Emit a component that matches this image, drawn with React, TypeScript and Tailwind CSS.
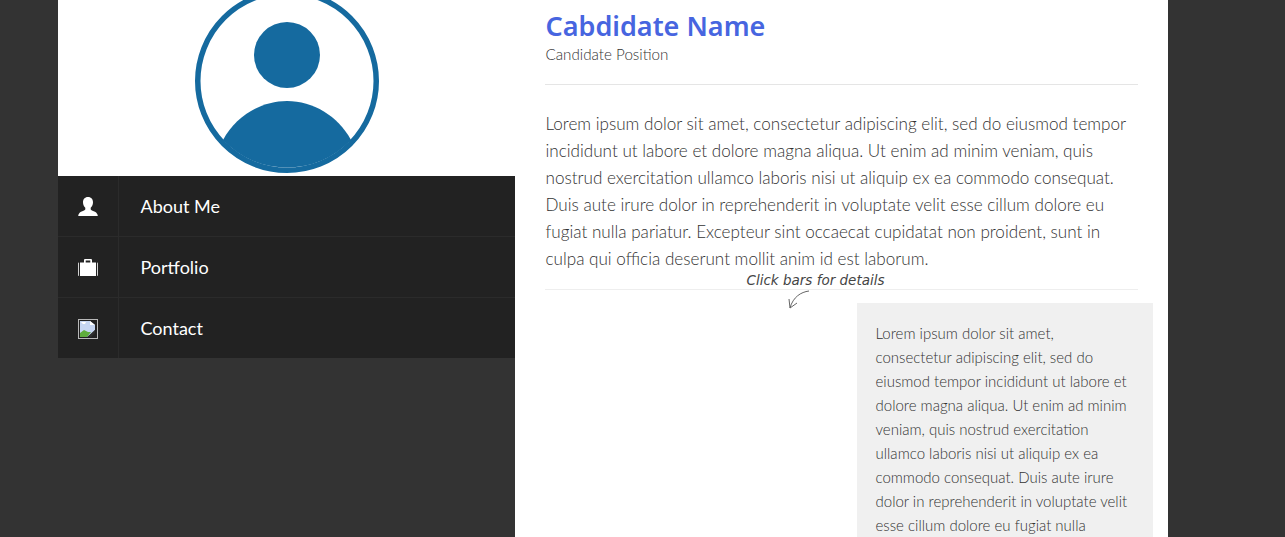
import React from "react";

const lines = [
  "Lorem ipsum dolor sit amet, consectetur adipiscing elit, sed do eiusmod tempor",
  "incididunt ut labore et dolore magna aliqua. Ut enim ad minim veniam, quis",
  "nostrud exercitation ullamco laboris nisi ut aliquip ex ea commodo consequat.",
  "Duis aute irure dolor in reprehenderit in voluptate velit esse cillum dolore eu",
  "fugiat nulla pariatur. Excepteur sint occaecat cupidatat non proident, sunt in",
  "culpa qui officia deserunt mollit anim id est laborum.",
];

const boxLines = [
  "Lorem ipsum dolor sit amet,",
  "consectetur adipiscing elit, sed do",
  "eiusmod tempor incididunt ut labore et",
  "dolore magna aliqua. Ut enim ad minim",
  "veniam, quis nostrud exercitation",
  "ullamco laboris nisi ut aliquip ex ea",
  "commodo consequat. Duis aute irure",
  "dolor in reprehenderit in voluptate velit",
  "esse cillum dolore eu fugiat nulla",
];

const UserIcon = () => (
  <svg width="20" height="20" viewBox="0 0 20 20" fill="#fff">
    <path d="M10 0c3.300 0 5 2.300 5 5.200 0 2.500-1 4.400-2.300 5.600v1.400c0 .9 1.300 1.300 3 2 1.800.7 3.300 1.600 4 3.800v1H0.300v-1c.7-2.200 2.200-3.100 4-3.800 1.700-.7 3-1.100 3-2v-1.400C6 9.600 5 7.700 5 5.200 5 2.300 6.700 0 10 0z" />
  </svg>
);

const CaseIcon = () => (
  <svg width="20" height="17" viewBox="0 0 20 17" fill="#fff">
    <path fillRule="evenodd" d="M6 3.500V1.200C6 .5 6.500 0 7.200 0h5.600c.7 0 1.200.5 1.200 1.200v2.300h4V17H2V3.500h4zm1.700-2v2h4.600v-2H7.700z" />
    <path d="M0 4.700c0-.7.300-1.200.8-1.200V17C.3 17 0 16.500 0 16zM20 4.700c0-.7-.3-1.200-.8-1.200V17c.5 0 .8-.5.8-1z" />
  </svg>
);

const BrokenImage = () => (
  <svg width="20" height="20" viewBox="0 0 20 20">
    <rect x="0.500" y="0.500" width="19" height="19" fill="#222222" stroke="#b8b8b8" />
    <path d="M2 2h10l5 4v5l-6 7H2z" fill="#c6d6f2" />
    <path d="M3 3h5l-1 2H5z" fill="#ffffff" />
    <path d="M2 14l4-3 4 2 3 0-4 5H2z" fill="#5fae3c" />
    <path d="M9 18l8-7v3l-4 4z" fill="#2e2e2e" />
    <path d="M12 2v4h5z" fill="#ffffff" />
  </svg>
);

const navItems = [
  { label: "About Me", icon: <UserIcon /> },
  { label: "Portfolio", icon: <CaseIcon /> },
  { label: "Contact", icon: <BrokenImage /> },
];

export default function App() {
  return (
    <div className="h-[537px] overflow-hidden bg-[#333333] font-['Lato',sans-serif]">
      <div className="mx-auto flex h-full w-[1110px] -translate-x-[30px]">
        <aside className="w-[457px]">
          <div className="flex h-[176px] justify-center overflow-hidden bg-white">
            <svg width="184" height="184" viewBox="0 0 184 184" className="-mt-[11px] ml-[1px] shrink-0">
              <circle cx="92" cy="92" r="89.250" fill="none" stroke="#156a9f" strokeWidth="5.500" />
              <circle cx="92" cy="66" r="33" fill="#156a9f" />
              <path d="M28 151C41 127 66 112 92 112s51 15 64 39A88 88 0 0 1 28 151z" fill="#156a9f" />
            </svg>
          </div>
          <nav className="bg-[#222222]">
            {navItems.map((item) => (
              <div key={item.label} className="flex h-[61px] border-b border-[#2b2b2b] last:h-[60px] last:border-b-0">
                <div className="flex w-[61px] items-center justify-center border-r border-[#2b2b2b] pt-[1px]">
                  {item.icon}
                </div>
                <span className="ml-[22px] self-center text-[18px] font-normal text-white">{item.label}</span>
              </div>
            ))}
          </nav>
        </aside>
        <main className="relative w-[653px] bg-white pl-[30px] pr-[30px] text-[#333333]">
          <h1 className="ml-[1px] pt-[8px] font-['Noto_Sans',sans-serif] text-[27px] font-semibold leading-[36px] text-[#4765e0]">
            Cabdidate Name
          </h1>
          <p className="ml-[1px] text-[15.2px] font-light leading-[20px]">Candidate Position</p>
          <hr className="mt-[20px] border-[#e5e5e5]" />
          <div className="ml-[1px] mt-[25px] whitespace-nowrap text-[17.1px] font-light leading-[27px]">
            {lines.map((line) => (
              <div key={line}>{line}</div>
            ))}
          </div>
          <hr className="mt-[17px] border-[#eeeeee]" />
          <span className="absolute left-[232px] top-[270px] font-['DejaVu_Sans',sans-serif] text-[13.500px] italic text-[#444444]">
            Click bars for details
          </span>
          <svg className="absolute left-[272px] top-[289px]" width="24" height="22" viewBox="0 0 24 22" fill="none" stroke="#666666" strokeWidth="1">
            <path d="M22 2C14 3 6 8 3 19M2 10l1 9 7-5" />
          </svg>
          <div className="ml-[312px] mt-[13px] w-[296px] bg-[#f0f0f0] px-[19px] pt-[18px] pb-[20px] whitespace-nowrap text-[15px] font-light leading-[24px]">
            {boxLines.map((line) => (
              <div key={line}>{line}</div>
            ))}
          </div>
        </main>
      </div>
    </div>
  );
}
